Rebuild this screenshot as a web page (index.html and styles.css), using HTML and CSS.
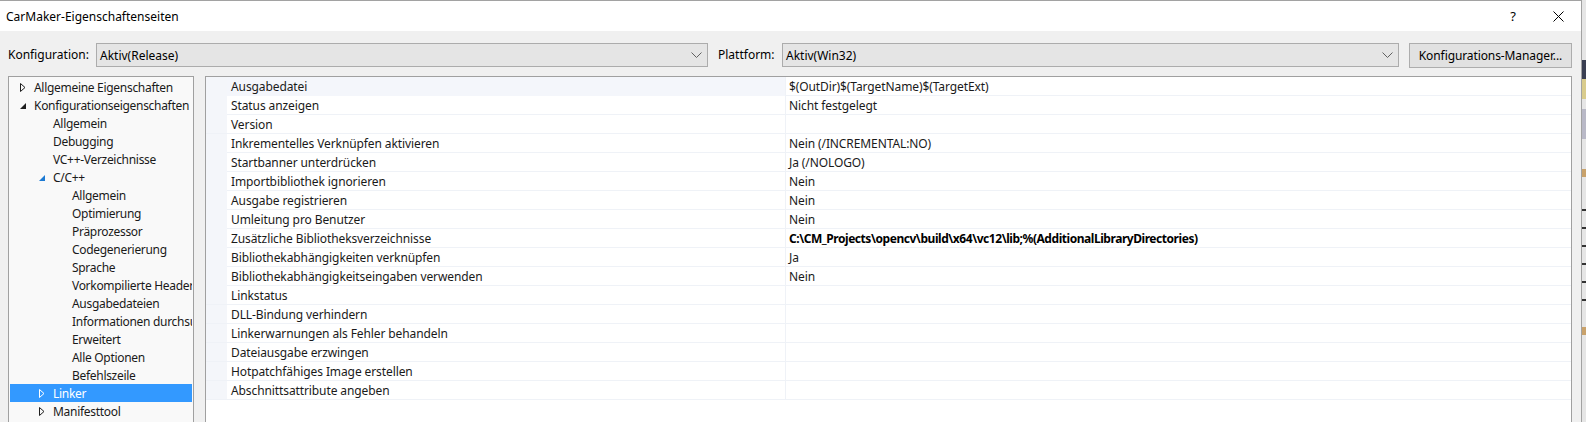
FILE: index.html
```html
<!DOCTYPE html>
<html lang="de">
<head>
<meta charset="utf-8">
<title>CarMaker-Eigenschaftenseiten</title>
<link rel="stylesheet" href="styles.css">
</head>
<body>
<div class="screen">
  <div class="dialog">
    <div class="titlebar">
      <span class="title">CarMaker-Eigenschaftenseiten</span>
      <div class="caption-btns">
        <span class="help">?</span>
        <svg class="close" width="11" height="11" viewBox="0 0 11 11"><path d="M0.5 0.5 L10.5 10.5 M10.5 0.5 L0.5 10.5" stroke="#000" stroke-width="1" fill="none"/></svg>
      </div>
    </div>
    <div class="content">
      <div class="toolbar">
        <span class="label label-konf">Konfiguration:</span>
        <div class="combo combo-konf"><span>Aktiv(Release)</span><svg class="chev" width="11" height="7" viewBox="0 0 11 7"><path d="M0.5 0.5 L5.5 5.5 L10.5 0.5" stroke="#606060" fill="none"/></svg></div>
        <span class="label label-plat">Plattform:</span>
        <div class="combo combo-plat"><span>Aktiv(Win32)</span><svg class="chev" width="11" height="7" viewBox="0 0 11 7"><path d="M0.5 0.5 L5.5 5.5 L10.5 0.5" stroke="#606060" fill="none"/></svg></div>
        <div class="button">Konfigurations-Manager...</div>
      </div>
      <div class="panels">
        <div class="tree">
          <div class="node l0"><span class="exp"><svg width="6" height="9" viewBox="0 0 6 9"><path d="M0.5 0.5 L5 4.5 L0.5 8.5 Z" fill="none" stroke="#1e1e1e"/></svg></span><span class="txt">Allgemeine Eigenschaften</span></div>
          <div class="node l0"><span class="exp"><svg width="6" height="9" viewBox="0 0 6 9"><path d="M6 2 L6 8 L0 8 Z" fill="#1e1e1e"/></svg></span><span class="txt">Konfigurationseigenschaften</span></div>
          <div class="node l1"><span class="exp"></span><span class="txt">Allgemein</span></div>
          <div class="node l1"><span class="exp"></span><span class="txt">Debugging</span></div>
          <div class="node l1"><span class="exp"></span><span class="txt">VC++-Verzeichnisse</span></div>
          <div class="node l1"><span class="exp"><svg width="6" height="9" viewBox="0 0 6 9"><path d="M6 2 L6 8 L0 8 Z" fill="#1c7ad3"/></svg></span><span class="txt">C/C++</span></div>
          <div class="node l2"><span class="exp"></span><span class="txt">Allgemein</span></div>
          <div class="node l2"><span class="exp"></span><span class="txt">Optimierung</span></div>
          <div class="node l2"><span class="exp"></span><span class="txt">Präprozessor</span></div>
          <div class="node l2"><span class="exp"></span><span class="txt">Codegenerierung</span></div>
          <div class="node l2"><span class="exp"></span><span class="txt">Sprache</span></div>
          <div class="node l2"><span class="exp"></span><span class="txt">Vorkompilierte Header</span></div>
          <div class="node l2"><span class="exp"></span><span class="txt">Ausgabedateien</span></div>
          <div class="node l2"><span class="exp"></span><span class="txt">Informationen durchsuchen</span></div>
          <div class="node l2"><span class="exp"></span><span class="txt">Erweitert</span></div>
          <div class="node l2"><span class="exp"></span><span class="txt">Alle Optionen</span></div>
          <div class="node l2"><span class="exp"></span><span class="txt">Befehlszeile</span></div>
          <div class="node l1 selected"><span class="exp"><svg width="6" height="9" viewBox="0 0 6 9"><path d="M0.5 0.5 L5 4.5 L0.5 8.5 Z" fill="none" stroke="#fff"/></svg></span><span class="txt">Linker</span></div>
          <div class="node l1"><span class="exp"><svg width="6" height="9" viewBox="0 0 6 9"><path d="M0.5 0.5 L5 4.5 L0.5 8.5 Z" fill="none" stroke="#1e1e1e"/></svg></span><span class="txt">Manifesttool</span></div>
        </div>
        <div class="props">
          <div class="row focus"><span class="gutter"></span><span class="name">Ausgabedatei</span><span class="value">$(OutDir)$(TargetName)$(TargetExt)</span></div>
          <div class="row"><span class="gutter"></span><span class="name">Status anzeigen</span><span class="value">Nicht festgelegt</span></div>
          <div class="row"><span class="gutter"></span><span class="name">Version</span><span class="value"></span></div>
          <div class="row"><span class="gutter"></span><span class="name">Inkrementelles Verknüpfen aktivieren</span><span class="value">Nein (/INCREMENTAL:NO)</span></div>
          <div class="row"><span class="gutter"></span><span class="name">Startbanner unterdrücken</span><span class="value">Ja (/NOLOGO)</span></div>
          <div class="row"><span class="gutter"></span><span class="name">Importbibliothek ignorieren</span><span class="value">Nein</span></div>
          <div class="row"><span class="gutter"></span><span class="name">Ausgabe registrieren</span><span class="value">Nein</span></div>
          <div class="row"><span class="gutter"></span><span class="name">Umleitung pro Benutzer</span><span class="value">Nein</span></div>
          <div class="row"><span class="gutter"></span><span class="name">Zusätzliche Bibliotheksverzeichnisse</span><span class="value bold">C:\CM_Projects\opencv\build\x64\vc12\lib;%(AdditionalLibraryDirectories)</span></div>
          <div class="row"><span class="gutter"></span><span class="name">Bibliothekabhängigkeiten verknüpfen</span><span class="value">Ja</span></div>
          <div class="row"><span class="gutter"></span><span class="name">Bibliothekabhängigkeitseingaben verwenden</span><span class="value">Nein</span></div>
          <div class="row"><span class="gutter"></span><span class="name">Linkstatus</span><span class="value"></span></div>
          <div class="row"><span class="gutter"></span><span class="name">DLL-Bindung verhindern</span><span class="value"></span></div>
          <div class="row"><span class="gutter"></span><span class="name">Linkerwarnungen als Fehler behandeln</span><span class="value"></span></div>
          <div class="row"><span class="gutter"></span><span class="name">Dateiausgabe erzwingen</span><span class="value"></span></div>
          <div class="row"><span class="gutter"></span><span class="name">Hotpatchfähiges Image erstellen</span><span class="value"></span></div>
          <div class="row"><span class="gutter"></span><span class="name">Abschnittsattribute angeben</span><span class="value"></span></div>
        </div>
      </div>
    </div>
  </div>
  <div class="edge">
    <span class="e1"></span><span class="e2"></span><span class="e3"></span><span class="e4"></span><span class="e5"></span><span class="e6"></span>
  </div>
</div>
</body>
</html>
```

FILE: styles.css
```css
* { box-sizing: border-box; }
html, body { margin: 0; padding: 0; }
body {
  width: 1586px;
  height: 422px;
  overflow: hidden;
  background: #f0f0f0;
  font-family: "Noto Sans", "Open Sans", sans-serif;
  font-size: 12px;
  color: #1a1a1a;
}
.screen { display: flex; width: 1586px; height: 422px; }
.dialog {
  width: 1582px;
  height: 422px;
  border-top: 1px solid #a2a2a2;
  border-right: 1px solid #a2a2a2;
  display: flex;
  flex-direction: column;
  overflow: hidden;
}
.titlebar {
  height: 30px;
  flex: none;
  background: #fff;
  display: flex;
  align-items: center;
  padding-left: 6px;
}
.title { font-size: 12px; color: #000; }
.caption-btns { margin-left: auto; display: flex; align-items: center; height: 100%; }
.help { font-size: 13px; color: #000; margin-right: 37px; }
.close { margin-right: 17px; display: block; }

.content { flex: 1; background: #f0f0f0; }
.toolbar {
  height: 45px;
  display: flex;
  align-items: flex-start;
  padding-top: 12px;
  padding-left: 8px;
}
.label { height: 24px; line-height: 24px; color: #000; }
.label-konf { width: 88px; }
.label-plat { width: 64px; margin-left: 10px; }
.combo {
  height: 24px;
  background: #e5e5e5;
  border: 1px solid #acacac;
  display: flex;
  align-items: center;
  padding-left: 3px;
  color: #000;
}
.combo-konf { width: 612px; }
.combo-plat { width: 617px; }
.combo .chev { margin-left: auto; margin-right: 5px; margin-top: 1px; }
.button {
  margin-left: 10px;
  width: 163px;
  height: 25px;
  background: #e1e1e1;
  border: 1px solid #adadad;
  display: flex;
  align-items: center;
  justify-content: center;
  color: #000;
  letter-spacing: -0.1px;
}

.panels { display: flex; padding-left: 8px; gap: 11px; height: 360px; }
.tree {
  width: 186px;
  height: 360px;
  background: #f9f9f9;
  border: 1px solid #a0a0a0;
  padding: 1px 1px 0 1px;
  overflow: hidden;
}
.node {
  height: 18px;
  white-space: nowrap;
  overflow: hidden;
  display: flex;
  align-items: center;
  color: #1a1a1a;
}
.node .txt { line-height: 18px; padding-top: 1px; letter-spacing: -0.3px; }
.node.l0 { padding-left: 10px; }
.node.l1 { padding-left: 29px; }
.node.l2 { padding-left: 48px; }
.exp { width: 14px; flex: none; height: 18px; display: flex; align-items: center; }
.exp svg { display: block; }
.node.selected { background: #3399ff; color: #fff; }

.props {
  width: 1367px;
  height: 360px;
  background: #fff;
  border: 1px solid #a0a0a0;
  overflow: hidden;
}
.row {
  display: grid;
  grid-template-columns: 21px 559px 1fr;
  height: 19px;
  border-bottom: 1px solid #eff2f7;
}
.gutter { background: #f4f6fa; }
.name {
  padding-left: 4px;
  padding-top: 1px;
  line-height: 18px;
  border-right: 1px solid #eff2f7;
  white-space: nowrap;
  overflow: hidden;
  color: #1a1a1a;
  letter-spacing: -0.1px;
}
.row.focus .name { background: #f4f6fb; }
.value { padding-left: 3px; padding-top: 1px; line-height: 18px; white-space: nowrap; color: #1a1a1a; letter-spacing: -0.1px; }
.value.bold { font-weight: bold; color: #000; letter-spacing: -0.45px; }

.edge {
  width: 4px;
  height: 422px;
  background: #e6e6e6;
  display: flex;
  flex-direction: column;
}
.edge span { display: block; width: 4px; }
.e1 { height: 19px; margin-top: 60px; background: #3a3f52; }
.e2 { height: 20px; background: #d9cc8d; }
.e3 { height: 30px; margin-top: 10px; background: #b9b9c7; }
.e4 { height: 8px; margin-top: 30px; background: #c9a26b; }
.e5 { height: 110px; margin-top: 20px; background: repeating-linear-gradient(#e6e6e6 0 12px, #333 12px 14px, #e6e6e6 14px 18px); }
.e6 { height: 8px; margin-top: 20px; background: #c9a26b; }
```
